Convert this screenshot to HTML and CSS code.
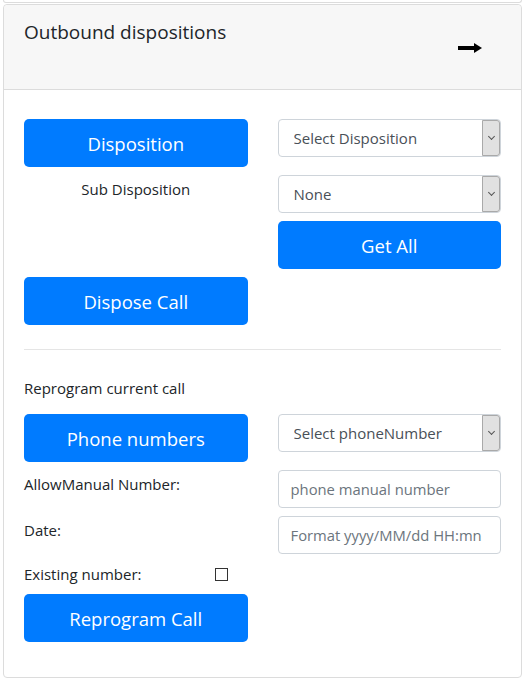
FILE: index.html
```html
<!DOCTYPE html>
<html lang="en">
<head>
  <meta charset="UTF-8" />
  <meta name="viewport" content="width=device-width, initial-scale=1.0" />
  <title>Outbound dispositions</title>
  <link rel="stylesheet" href="styles.css">
</head>
<body>
  <div class="prev-card"></div>
  <div class="card">
    <div class="card-header">
      <h5 class="card-title">Outbound dispositions</h5>
      <span class="toggle-arrow">
        <svg width="24" height="10" viewBox="0 0 24 10">
          <rect x="0" y="3" width="17" height="4" fill="#000"/>
          <polygon points="16,0 24,5 16,10" fill="#000"/>
        </svg>
      </span>
    </div>
    <div class="card-body">
      <div class="form-grid">
        <button type="button" class="btn">Disposition</button>
        <div class="select-wrap">
          <select id="disposition">
            <option>Select Disposition</option>
          </select>
        </div>
        <div class="sub-label">Sub Disposition</div>
        <div class="stack">
          <div class="select-wrap">
            <select id="subDisposition">
              <option>None</option>
            </select>
          </div>
          <button type="button" class="btn">Get All</button>
        </div>
        <button type="button" class="btn">Dispose Call</button>
      </div>

      <hr>

      <p class="section-label">Reprogram current call</p>

      <div class="form-grid">
        <button type="button" class="btn">Phone numbers</button>
        <div class="select-wrap">
          <select id="phoneNumber">
            <option>Select phoneNumber</option>
          </select>
        </div>
        <label class="field-label" for="manualNumber">AllowManual Number:</label>
        <input type="text" id="manualNumber" class="form-control" placeholder="phone manual number">
        <label class="field-label" for="callDate">Date:</label>
        <input type="text" id="callDate" class="form-control" placeholder="Format yyyy/MM/dd HH:mn">
        <label class="field-label check-row">
          <span class="check-text">Existing number:</span>
          <input type="checkbox" id="existingNumber">
        </label>
        <div></div>
        <button type="button" class="btn">Reprogram Call</button>
      </div>
    </div>
  </div>
</body>
</html>
```

FILE: styles.css
```css
body {
  margin: 0;
  font-family: "Open Sans", "Noto Sans", sans-serif;
  color: #212529;
  background-color: #fff;
}
.prev-card {
  height: 2px;
  margin: 0 3px;
  border: 1px solid #dcdcdc;
  border-top: none;
  border-radius: 0 0 4px 4px;
}
.card {
  margin: 1px 3px 0;
  border: 1px solid #dcdcdc;
  border-radius: 4px;
}
.card-header {
  display: flex;
  justify-content: space-between;
  align-items: flex-start;
  height: 85px;
  box-sizing: border-box;
  padding: 14px 39px 0 20px;
  background-color: #f7f7f7;
  border-bottom: 1px solid #dcdcdc;
  border-radius: 4px 4px 0 0;
}
.card-title {
  margin: 0;
  font-size: 19px;
  font-weight: 400;
  line-height: 26px;
}
.toggle-arrow {
  margin-top: 24px;
}
.toggle-arrow svg {
  display: block;
}
.card-body {
  padding: 29px 20px 35px;
}
.form-grid {
  display: grid;
  grid-template-columns: 1fr 1fr;
  column-gap: 30px;
  row-gap: 8px;
  align-items: start;
}
.stack {
  display: flex;
  flex-direction: column;
  gap: 8px;
}
.btn {
  height: 48px;
  padding: 0 16px;
  font-family: inherit;
  font-size: 18.5px;
  color: #fff;
  background-color: #007bff;
  border: none;
  border-radius: 5px;
}
.sub-label {
  text-align: center;
  font-size: 15px;
  line-height: 24px;
  padding-top: 2px;
}
.select-wrap {
  position: relative;
}
.select-wrap select {
  width: 100%;
  height: 38px;
  padding: 0 24px 0 15px;
  font-family: inherit;
  font-size: 15px;
  color: #495057;
  background: #fff;
  border: 1px solid #ced4da;
  border-radius: 4px;
  appearance: none;
  -webkit-appearance: none;
}
.select-wrap::after {
  content: "";
  position: absolute;
  top: 1px;
  right: 1px;
  bottom: 1px;
  width: 16px;
  background-color: #e1e1e1;
  border: 1px solid #a9a9a9;
  border-radius: 0 3px 3px 0;
  pointer-events: none;
}
.select-wrap::before {
  content: "";
  position: absolute;
  top: 15px;
  right: 7px;
  width: 4px;
  height: 4px;
  border-right: 1px solid #555;
  border-bottom: 1px solid #555;
  transform: rotate(45deg);
  z-index: 1;
  pointer-events: none;
}
.form-control {
  box-sizing: border-box;
  width: 100%;
  height: 38px;
  padding: 0 12px;
  font-family: inherit;
  font-size: 14.8px;
  color: #495057;
  border: 1px solid #ced4da;
  border-radius: 4px;
}
.form-control::placeholder {
  color: #6c757d;
}
hr {
  margin: 24px 0 0;
  border: 0;
  border-top: 1px solid #e5e5e5;
}
.section-label {
  margin: 27px 0 15px;
  font-size: 15px;
  line-height: 22px;
}
.field-label {
  font-size: 15px;
  line-height: 24px;
  padding-top: 2px;
}
.check-row {
  display: flex;
  align-items: center;
  height: 24px;
  padding-top: 0;
}
.check-text {
  width: 191px;
}
.check-row input {
  appearance: none;
  -webkit-appearance: none;
  width: 13px;
  height: 13px;
  margin: 0;
  border: 1px solid #333;
  background: #fff;
}
```
